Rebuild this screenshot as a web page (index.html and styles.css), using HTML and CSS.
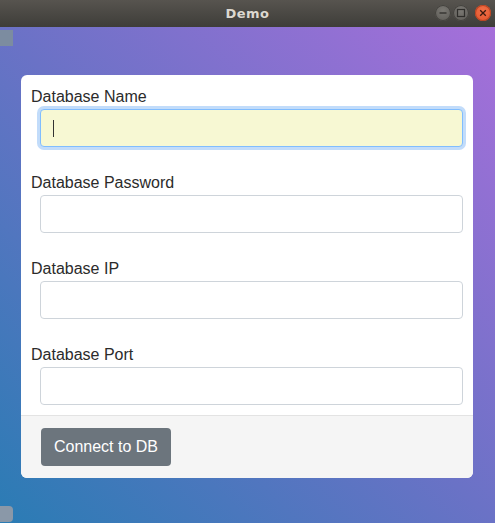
FILE: index.html
```html
<!DOCTYPE html>
<html>
<head>
<meta charset="utf-8">
<link rel="stylesheet" href="styles.css">
</head>
<body>
<div class="window">
  <div class="titlebar">
    <span class="title">Demo</span>
    <div class="controls">
      <span class="ctl"><svg width="16" height="16" viewBox="0 0 16 16"><line x1="4.5" y1="8" x2="11.5" y2="8" stroke="#2f2e2b" stroke-width="1.3"/></svg></span>
      <span class="ctl"><svg width="16" height="16" viewBox="0 0 16 16"><rect x="4.5" y="4.5" width="7" height="7" fill="none" stroke="#2f2e2b" stroke-width="1.2"/></svg></span>
      <span class="ctl close"><svg width="16" height="16" viewBox="0 0 16 16"><path d="M5.2 5.2 L10.8 10.8 M10.8 5.2 L5.2 10.8" stroke="#3a1a10" stroke-width="1.3"/></svg></span>
    </div>
  </div>
  <div class="desktop">
    <span class="tab tab-top"></span>
    <span class="tab tab-bottom"></span>
    <div class="card">
      <div class="card-body">
        <div class="field">
          <label class="label">Database Name</label>
          <div class="input focused"><span class="caret"></span></div>
        </div>
        <div class="field">
          <label class="label">Database Password</label>
          <div class="input"></div>
        </div>
        <div class="field">
          <label class="label">Database IP</label>
          <div class="input"></div>
        </div>
        <div class="field">
          <label class="label">Database Port</label>
          <div class="input"></div>
        </div>
      </div>
      <div class="card-footer">
        <button class="btn">Connect to DB</button>
      </div>
    </div>
  </div>
</div>
</body>
</html>
```
FILE: styles.css
```css
html, body {
  margin: 0;
  padding: 0;
  width: 495px;
  height: 523px;
  overflow: hidden;
}
.window {
  width: 495px;
  height: 523px;
  display: flex;
  flex-direction: column;
}
.titlebar {
  height: 27px;
  flex: 0 0 27px;
  background: linear-gradient(#57544f, #3e3d39);
  position: relative;
  display: flex;
  align-items: center;
  justify-content: center;
}
.title {
  font-family: "DejaVu Sans", sans-serif;
  font-weight: bold;
  font-size: 13px;
  color: #dcd8d0;
  letter-spacing: 0.5px;
}
.controls {
  position: absolute;
  right: 4px;
  top: 5px;
  display: flex;
  gap: 2px;
}
.ctl {
  width: 16px;
  height: 16px;
  border-radius: 50%;
  background: radial-gradient(circle at 50% 35%, #7a7873, #5b5954);
  box-shadow: inset 0 0 0 1px #44423e;
  display: flex;
}
.ctl.close {
  margin-left: 4px;
  background: radial-gradient(circle at 50% 35%, #f07048, #e0522a);
  box-shadow: inset 0 0 0 1px #b84422;
}
.desktop {
  flex: 1;
  position: relative;
  background: linear-gradient(to top right, #2a7cb4 0%, #6a72c6 50%, #a66fda 100%);
  padding: 48px 23px 0 21px;
}
.tab {
  position: absolute;
  left: 0;
  width: 13px;
  height: 16px;
  background: #7c8ca0;
}
.tab-top {
  top: 3px;
}
.tab-bottom {
  top: 479px;
  background: #8a98a8;
  border-radius: 0 4px 4px 0;
}
.card {
  width: 452px;
  background: #fff;
  border-radius: 6px;
  overflow: hidden;
  font-family: "Liberation Sans", Arial, sans-serif;
}
.card-body {
  padding: 10px 10px 10px 10px;
  display: flex;
  flex-direction: column;
  gap: 24px;
}
.field {
  display: flex;
  flex-direction: column;
}
.label {
  font-size: 16px;
  line-height: 24px;
  color: #2b2b2b;
}
.input {
  margin-left: 9px;
  height: 38px;
  box-sizing: border-box;
  border: 1px solid #ced4da;
  border-radius: 4px;
  background: #fff;
  display: flex;
  align-items: center;
  padding-left: 12px;
}
.input.focused {
  background: #f7f8d3;
  border-color: #80bdff;
  box-shadow: 0 0 0 3px #c2dcfa;
}
.caret {
  width: 1px;
  height: 17px;
  background: #333;
}
.card-footer {
  background: #f5f5f5;
  border-top: 1px solid #e3e3e3;
  padding: 12px 20px 12px 20px;
  display: flex;
}
.btn {
  width: 130px;
  height: 38px;
  background: #6c757d;
  color: #fff;
  border: none;
  border-radius: 4px;
  font-family: "Liberation Sans", Arial, sans-serif;
  font-size: 16px;
  padding: 0;
}
```
